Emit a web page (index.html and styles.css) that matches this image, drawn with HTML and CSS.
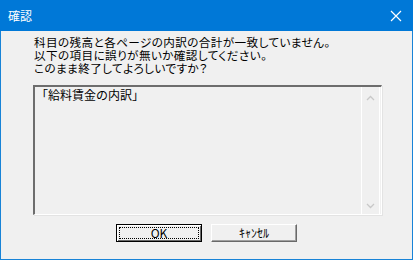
FILE: index.html
```html
<!DOCTYPE html>
<html lang="ja">
<head>
<meta charset="utf-8">
<link rel="stylesheet" href="styles.css">
</head>
<body>
<div class="window">
  <div class="titlebar">
    <span class="title">確認</span>
    <svg class="close" width="12" height="12" viewBox="0 0 12 12"><path d="M1 1L11 11M11 1L1 11" stroke="#fff" stroke-width="1.2" fill="none"/></svg>
  </div>
  <div class="body">
    <div class="msg">
      <div class="line">科目の残高と各ページの内訳の合計が一致していません。</div>
      <div class="line">以下の項目に誤りが無いか確認してください。</div>
      <div class="line">このまま終了してよろしいですか？</div>
    </div>
    <div class="list">
      <div class="items">「給料賃金の内訳」</div>
      <div class="scroll">
        <svg width="9" height="6" viewBox="0 0 9 6"><path d="M1 5L4.5 1.5L8 5" stroke="#c8c8c8" stroke-width="1.3" fill="none"/></svg>
        <svg width="9" height="6" viewBox="0 0 9 6"><path d="M1 1L4.5 4.5L8 1" stroke="#c8c8c8" stroke-width="1.3" fill="none"/></svg>
      </div>
    </div>
    <div class="buttons">
      <div class="btn default"><span class="focus">OK</span></div>
      <div class="btn">ｷｬﾝｾﾙ</div>
    </div>
  </div>
</div>
</body>
</html>
```
FILE: styles.css
```css
html, body {
  margin: 0;
  padding: 0;
  background: #f0f0f0;
}
.window {
  width: 413px;
  height: 260px;
  box-sizing: border-box;
  border: 1px solid #1883d7;
  border-top: none;
  display: flex;
  flex-direction: column;
  font-family: "Noto Sans CJK JP", "DejaVu Sans", sans-serif;
  font-size: 12px;
  color: #000;
}
.titlebar {
  height: 31px;
  background: #0078d7;
  display: flex;
  align-items: center;
  justify-content: space-between;
  padding: 0 10px 0 8px;
  margin: 0 -1px;
}
.title {
  color: #fff;
  font-size: 12px;
  margin-top: -1px;
}
.close {
  margin-right: 1px;
}
.body {
  flex: 1;
  padding: 5px 30px 0 33px;
  display: flex;
  flex-direction: column;
}
.msg {
  display: flex;
  flex-direction: column;
}
.line {
  height: 13px;
  line-height: 13px;
  font-family: "Liberation Sans", "Noto Sans CJK JP", sans-serif;
  font-size: 11.6px;
  font-feature-settings: "palt";
  letter-spacing: 0.4px;
  white-space: nowrap;
}
.list {
  margin-top: 10px;
  height: 130px;
  box-sizing: border-box;
  border-top: 2px solid #6d6d6d;
  border-left: 2px solid #6d6d6d;
  border-right: 1px solid #fff;
  border-bottom: 1px solid #fff;
  box-shadow: 1px 1px 0 #e3e3e3;
  display: flex;
  margin-left: -1px;
}
.items {
  flex: 1;
  padding: 1px 0 0 1px;
  line-height: 14px;
}
.scroll {
  width: 17px;
  border-left: 1px solid #fff;
  border-right: 1px solid #fff;
  display: flex;
  flex-direction: column;
  justify-content: space-between;
  align-items: center;
  padding: 8px 0 5px;
  margin-right: 1px;
}
.buttons {
  display: flex;
  gap: 9px;
  margin: 9px 0 0 82px;
}
.btn {
  width: 86px;
  height: 18px;
  box-sizing: border-box;
  border: 1px solid;
  border-color: #fff #696969 #696969 #fff;
  box-shadow: inset -1px -1px 0 #a0a0a0;
  display: flex;
  align-items: center;
  justify-content: center;
  font-size: 12px;
  line-height: 12px;
}
.btn.default {
  border: 1px solid #000;
  box-shadow: inset 1px 1px 0 #fff, inset -1px -1px 0 #696969;
  padding: 2px;
}
.focus {
  flex: 1;
  align-self: stretch;
  border: 1px dotted #000;
  display: flex;
  align-items: center;
  justify-content: center;
}
```
